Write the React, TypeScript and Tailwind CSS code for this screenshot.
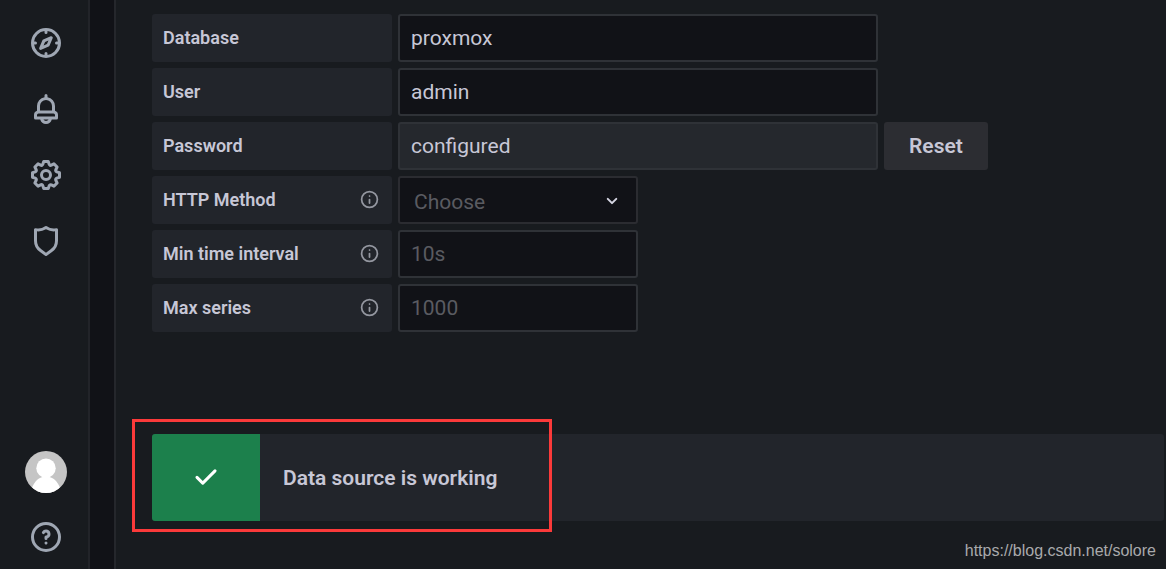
import React from "react";

const icons = {
  compass:
    "M12,2A10,10,0,1,0,22,12,10,10,0,0,0,12,2Zm1,17.93V19a1,1,0,0,0-2,0v.93A8,8,0,0,1,4.07,13H5a1,1,0,0,0,0-2H4.07A8,8,0,0,1,11,4.07V5a1,1,0,0,0,2,0V4.07A8,8,0,0,1,19.93,11H19a1,1,0,0,0,0,2h.93A8,8,0,0,1,13,19.93ZM15.14,7.55l-5,2.12a1,1,0,0,0-.52.52l-2.12,5a1,1,0,0,0,.21,1.1,1,1,0,0,0,.7.3.93.93,0,0,0,.4-.09l5-2.12a1,1,0,0,0,.52-.52l2.12-5a1,1,0,0,0-1.31-1.31Zm-2.49,5.1-2.28,1,1-2.28,2.28-1Z",
  bell: "M18,13.18V10a6,6,0,0,0-5-5.91V3a1,1,0,0,0-2,0V4.09A6,6,0,0,0,6,10v3.18A3,3,0,0,0,4,16v2a1,1,0,0,0,1,1H8.14a4,4,0,0,0,7.72,0H19a1,1,0,0,0,1-1V16A3,3,0,0,0,18,13.18ZM8,10a4,4,0,0,1,8,0v3H8Zm4,10a2,2,0,0,1-1.72-1h3.44A2,2,0,0,1,12,20Zm6-3H6V16a1,1,0,0,1,1-1H17a1,1,0,0,1,1,1Z",
  cog: "M21.32,9.55l-1.89-.63.89-1.78A1,1,0,0,0,20.13,6L18,3.87a1,1,0,0,0-1.15-.19l-1.78.89-.63-1.89A1,1,0,0,0,13.5,2h-3a1,1,0,0,0-.95.68L8.92,4.57,7.14,3.68A1,1,0,0,0,6,3.87L3.87,6a1,1,0,0,0-.19,1.15l.89,1.78-1.89.63A1,1,0,0,0,2,10.5v3a1,1,0,0,0,.68.95l1.89.63-.89,1.78A1,1,0,0,0,3.87,18L6,20.13a1,1,0,0,0,1.15.19l1.78-.89.63,1.89a1,1,0,0,0,.95.68h3a1,1,0,0,0,.95-.68l.63-1.89,1.78.89A1,1,0,0,0,18,20.13L20.13,18a1,1,0,0,0,.19-1.15l-.89-1.78,1.89-.63A1,1,0,0,0,22,13.5v-3A1,1,0,0,0,21.32,9.55ZM20,12.78l-1.2.4A2,2,0,0,0,17.64,16l.57,1.14-1.1,1.1L16,17.64a2,2,0,0,0-2.79,1.16l-.4,1.2H11.22l-.4-1.2A2,2,0,0,0,8,17.64l-1.14.57-1.1-1.1L6.36,16A2,2,0,0,0,5.2,13.18L4,12.78V11.22l1.2-.4A2,2,0,0,0,6.36,8L5.79,6.89l1.1-1.1L8,6.36A2,2,0,0,0,10.82,5.2l.4-1.2h1.56l.4,1.2A2,2,0,0,0,16,6.36l1.14-.57,1.1,1.1L17.64,8a2,2,0,0,0,1.16,2.79l1.2.4ZM12,8a4,4,0,1,0,4,4A4,4,0,0,0,12,8Zm0,6a2,2,0,1,1,2-2A2,2,0,0,1,12,14Z",
  shield:
    "M19.63,3.65a1,1,0,0,0-.84-.2,8,8,0,0,1-6.22-1.27,1,1,0,0,0-1.14,0A8,8,0,0,1,5.21,3.45a1,1,0,0,0-.84.2A1,1,0,0,0,4,4.43v7.45a9,9,0,0,0,3.77,7.33l3.65,2.6a1,1,0,0,0,1.16,0l3.65-2.6A9,9,0,0,0,20,11.88V4.43A1,1,0,0,0,19.63,3.65ZM18,11.88a7,7,0,0,1-2.93,5.7L12,19.77,8.93,17.58A7,7,0,0,1,6,11.88V5.58a10,10,0,0,0,6-1.39,10,10,0,0,0,6,1.39Z",
  help: "M11.29,15.29a1.58,1.58,0,0,0-.12.15.76.76,0,0,0-.09.18.64.64,0,0,0-.06.18,1.36,1.36,0,0,0,0,.2.84.84,0,0,0,.08.38.9.9,0,0,0,.54.54.94.94,0,0,0,.76,0,.9.9,0,0,0,.54-.54A1,1,0,0,0,13,16a1,1,0,0,0-.29-.71A1,1,0,0,0,11.29,15.29ZM12,2A10,10,0,1,0,22,12,10,10,0,0,0,12,2Zm0,18a8,8,0,1,1,8-8A8,8,0,0,1,12,20ZM12,7A3,3,0,0,0,9.4,8.5a1,1,0,1,0,1.73,1A1,1,0,0,1,12,9a1,1,0,0,1,0,2,1,1,0,0,0-1,1v1a1,1,0,0,0,2,0v-.18A3,3,0,0,0,12,7Z",
  info: "M12,2A10,10,0,1,0,22,12,10,10,0,0,0,12,2Zm0,18a8,8,0,1,1,8-8A8,8,0,0,1,12,20Zm0-9a1,1,0,0,0-1,1v4a1,1,0,0,0,2,0V12A1,1,0,0,0,12,11Zm.38-3.92a1,1,0,0,0-.76,0,1,1,0,0,0-.33.21,1.15,1.15,0,0,0-.21.33A.84.84,0,0,0,11,8a1,1,0,0,0,.29.71,1.15,1.15,0,0,0,.33.21A1,1,0,0,0,13,8a1.05,1.05,0,0,0-.29-.71A1,1,0,0,0,12.38,7.08Z",
  angleDown:
    "M17,9.17a1,1,0,0,0-1.41,0L12,12.71,8.46,9.17a1,1,0,0,0-1.41,0,1,1,0,0,0,0,1.42l4.24,4.24a1,1,0,0,0,1.42,0L17,10.59A1,1,0,0,0,17,9.17Z",
  check:
    "M18.71,7.21a1,1,0,0,0-1.42,0L9.84,14.67,6.71,11.53A1,1,0,1,0,5.29,13l3.84,3.84a1,1,0,0,0,1.42,0l8.16-8.16A1,1,0,0,0,18.71,7.21Z",
};

type IconName = keyof typeof icons;

function Icon({ name, className }: { name: IconName; className: string }) {
  return (
    <svg viewBox="0 0 24 24" fill="currentColor" aria-hidden="true" className={className}>
      <path d={icons[name]} />
    </svg>
  );
}

function NavLink({ name, label }: { name: IconName; label: string }) {
  return (
    <a href="#" aria-label={label} className="text-[#9fa7b3]">
      <Icon name={name} className="size-9" />
    </a>
  );
}

function Row({
  id,
  label,
  info,
  children,
}: {
  id: string;
  label: string;
  info?: boolean;
  children: React.ReactNode;
}) {
  return (
    <div className="flex gap-1.5">
      <label
        htmlFor={id}
        className="flex h-12 w-60 shrink-0 items-center justify-between rounded-[3px] bg-[#22252b] pr-3 pl-[11px] text-lg font-semibold"
      >
        {label}
        {info && <Icon name="info" className="mb-px size-[21px] text-[#9497a0]" />}
      </label>
      {children}
    </div>
  );
}

const field =
  "h-12 rounded-[3px] border-2 border-[#2f3237] px-[11px] text-[21px] text-[#c7c7d6] placeholder-[#5a5b61] outline-none";

export default function App() {
  return (
    <div className="relative flex min-h-screen bg-[#111217] font-[Roboto,sans-serif] text-[#c7c7d6]">
      <nav
        aria-label="Main"
        className="flex w-[90px] shrink-0 flex-col items-center justify-between border-r-2 border-[#222429] bg-[#181b1f] pt-[25px] pb-3.5 pl-1"
      >
        <div className="flex flex-col gap-[30px]">
          <NavLink name="compass" label="Explore" />
          <NavLink name="bell" label="Alerting" />
          <NavLink name="cog" label="Configuration" />
          <NavLink name="shield" label="Server admin" />
        </div>
        <div className="flex flex-col items-center gap-[26px]">
          <a href="#" aria-label="Profile">
            <svg viewBox="0 0 42 42" aria-hidden="true" className="size-[42px] rounded-full bg-[#c5c5c5]">
              <circle cx="21" cy="17.2" r="9.7" fill="#fff" />
              <path d="M5.5 42C7.500 32 13 25.500 21 25.500S34.500 32 36.500 42Z" fill="#fff" />
            </svg>
          </a>
          <NavLink name="help" label="Help" />
        </div>
      </nav>

      <main className="ml-6 min-w-0 flex-1 border-l-2 border-[#25272c] bg-[#181b1f] pt-3.5 pr-0.5 pb-12 pl-9">
        <form className="flex flex-col gap-1.5" onSubmit={(e) => e.preventDefault()}>
          <Row id="database" label="Database">
            <input id="database" defaultValue="proxmox" className={`${field} w-[480px] min-w-0 bg-[#111217]`} />
          </Row>
          <Row id="user" label="User">
            <input id="user" defaultValue="admin" className={`${field} w-[480px] min-w-0 bg-[#111217]`} />
          </Row>
          <Row id="password" label="Password">
            <input id="password" disabled value="configured" className={`${field} w-[480px] min-w-0 bg-[#25282d]`} />
            <button type="button" className="h-12 rounded-[3px] bg-[#2c2d32] px-[25px] pt-0.5 text-[21px] font-semibold">
              Reset
            </button>
          </Row>
          <Row id="method" label="HTTP Method" info>
            <div className="relative w-60">
              <select
                id="method"
                defaultValue=""
                className="h-12 w-full appearance-none rounded-[3px] border-2 border-[#2b2c31] bg-[#111217] pt-1.5 pr-10 pl-3.5 text-[21px] text-[#5a5b61] outline-none"
              >
                <option value="">Choose</option>
                <option>GET</option>
                <option>POST</option>
              </select>
              <Icon name="angleDown" className="pointer-events-none absolute top-[13px] right-3.5 size-6 text-[#d5d5e2]" />
            </div>
          </Row>
          <Row id="interval" label="Min time interval" info>
            <input id="interval" placeholder="10s" className={`${field} w-60 min-w-0 bg-[#111217]`} />
          </Row>
          <Row id="series" label="Max series" info>
            <input id="series" placeholder="1000" className={`${field} w-60 min-w-0 bg-[#111217]`} />
          </Row>
        </form>

        <div role="status" className="relative mt-[102px] flex h-[87px] rounded-[3px] bg-[#22252b]">
          <div className="flex w-[108px] items-center justify-center rounded-l-[3px] bg-[#1c804c] pb-0.5 text-white">
            <Icon name="check" className="size-9" />
          </div>
          <p className="flex items-center px-[23px] pt-0.5 text-[21px] font-semibold">Data source is working</p>
          <div className="pointer-events-none absolute -top-[15px] -left-5 h-[113px] w-[420px] border-3 border-[#fb3a3a]" />
        </div>
      </main>

      <p className="absolute right-2.5 bottom-1.5 font-['Liberation_Sans',sans-serif] text-base text-[#a9aaac]">
        https://blog.csdn.net/solore
      </p>
    </div>
  );
}
